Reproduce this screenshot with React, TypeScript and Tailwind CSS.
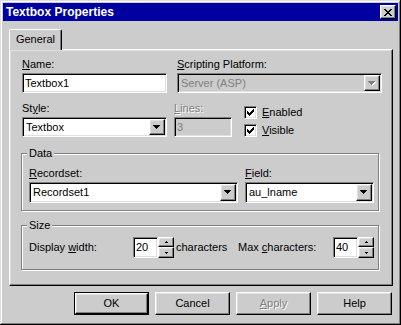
import React from "react";

const face = "bg-[#cccccc]";
const sunken =
  "border border-t-[#808080] border-l-[#808080] border-b-white border-r-white shadow-[inset_1px_1px_0_#000,inset_-1px_-1px_0_#dfdfdf]";
const raised =
  "border border-t-white border-l-white border-b-black border-r-black shadow-[inset_-1px_-1px_0_#808080,inset_1px_1px_0_#dfdfdf]";
const etched = "border border-[#808080] shadow-[inset_1px_1px_0_#fff,1px_1px_0_#fff]";
const grayText = "text-[#808080] [text-shadow:1px_1px_0_#fff]";

const DownArrow = ({ disabled = false }: { disabled?: boolean }) => (
  <svg width="8" height="5" viewBox="0 0 8 5" shapeRendering="crispEdges">
    {disabled && (
      <path d="M1 1H8V2H7V3H6V4H5V5H4V4H3V3H2V2H1Z" fill="#fff" />
    )}
    <path
      d="M0 0H7V1H6V2H5V3H4V4H3V3H2V2H1V1H0Z"
      fill={disabled ? "#808080" : "#000"}
    />
  </svg>
);

const TinyArrow = ({ up }: { up?: boolean }) => (
  <svg width="3" height="2" viewBox="0 0 3 2" shapeRendering="crispEdges">
    <path d={up ? "M1 0H2V1H3V2H0V1H1Z" : "M0 0H3V1H2V2H1V1H0Z"} fill="#000" />
  </svg>
);

const CloseGlyph = () => (
  <svg width="8" height="7" viewBox="0 0 8 7" shapeRendering="crispEdges">
    <path
      d="M0 0H2V1H3V2H5V1H6V0H8V1H7V2H6V3H5V4H6V5H7V6H8V7H6V6H5V5H3V6H2V7H0V6H1V5H2V4H3V3H2V2H1V1H0Z"
      fill="#000"
    />
  </svg>
);

const CheckMark = () => (
  <svg width="7" height="7" viewBox="0 0 7 7" shapeRendering="crispEdges">
    <path
      d="M6 0H7V3H6V4H5V5H4V6H3V7H2V6H1V5H0V2H1V3H2V4H3V3H4V2H5V1H6Z"
      fill="#000"
    />
  </svg>
);

const Combo = ({
  value,
  className,
  disabled = false,
}: {
  value: string;
  className: string;
  disabled?: boolean;
}) => (
  <div
    className={`${sunken} ${className} flex items-center p-px ${
      disabled ? face : "bg-white"
    }`}
  >
    <span className={`flex-1 pl-[2px] ${disabled ? "text-[#808080]" : ""}`}>
      {value}
    </span>
    <div
      className={`${raised} ${face} w-[16px] self-stretch flex items-center justify-center`}
    >
      <DownArrow disabled={disabled} />
    </div>
  </div>
);

const Spin = ({ value }: { value: string }) => (
  <div className="flex h-[21px]">
    <div className={`${sunken} bg-white w-[25px] flex items-center pl-[2px]`}>
      {value}
    </div>
    <div className="flex flex-col w-[16px]">
      <div className={`${raised} ${face} h-[10px] flex items-center justify-center`}>
        <TinyArrow up />
      </div>
      <div className={`${raised} ${face} h-[11px] flex items-center justify-center`}>
        <TinyArrow />
      </div>
    </div>
  </div>
);

const Check = ({ label, u }: { label: string; u: string }) => (
  <div className="flex items-center h-[13px]">
    <div
      className={`${sunken} bg-white w-[13px] h-[13px] flex items-center justify-center`}
    >
      <CheckMark />
    </div>
    <span className="ml-[5px]">
      <u>{u}</u>
      {label}
    </span>
  </div>
);

const Btn = ({
  children,
  def = false,
  disabled = false,
}: {
  children: React.ReactNode;
  def?: boolean;
  disabled?: boolean;
}) =>
  def ? (
    <div className="w-[75px] h-[23px] border border-black">
      <div className={`${raised} w-full h-full flex items-center justify-center`}>
        {children}
      </div>
    </div>
  ) : (
    <div
      className={`${raised} w-[75px] h-[23px] flex items-center justify-center ${
        disabled ? grayText : ""
      }`}
    >
      {children}
    </div>
  );

export default function App() {
  return (
    <div
      className={`w-[401px] h-[325px] ${face} p-[3px] shadow-[inset_-1px_-1px_0_#000,inset_1px_1px_0_#dfdfdf,inset_-2px_-2px_0_#808080,inset_2px_2px_0_#fff] font-['Liberation_Sans',Arial,sans-serif] text-[11px] leading-[13px] text-black`}
    >
      <div className="h-[18px] bg-[#0000a0] flex items-center justify-between pl-[3px] pr-[2px]">
        <span className="text-white font-bold text-[12px]">Textbox Properties</span>
        <div
          className={`${raised} ${face} w-[16px] h-[14px] flex items-center justify-center`}
        >
          <CloseGlyph />
        </div>
      </div>

      <div className="pl-[6px] pr-[5px] pt-[8px]">
        <div className="flex">
          <div
            className={`relative z-10 -mb-px w-[53px] h-[21px] ${face} border-l border-t border-r border-l-white border-t-white border-r-black rounded-t-[2px] shadow-[inset_-1px_0_0_#808080] flex justify-center pt-[3px]`}
          >
            General
          </div>
        </div>

        <div
          className={`${raised} h-[237px] pl-[11px] pt-[8px]`}
        >
          <div className="flex pl-px">
            <div className="w-[145px]">
              <div>
                <u>N</u>ame:
              </div>
              <div
                className={`${sunken} bg-white mt-[2px] h-[20px] flex items-center pl-[2px]`}
              >
                Textbox1
              </div>
            </div>
            <div className="ml-[10px]">
              <div>
                <u>S</u>cripting Platform:
              </div>
              <Combo
                value="Server (ASP)"
                className="mt-[2px] w-[205px] h-[20px]"
                disabled
              />
            </div>
          </div>

          <div className="flex pl-px mt-[9px]">
            <div className="w-[145px]">
              <div>
                St<u>y</u>le:
              </div>
              <Combo value="Textbox" className="mt-[2px] w-[145px] h-[20px]" />
            </div>
            <div className="ml-[7px]">
              <div className={grayText}>
                <u>L</u>ines:
              </div>
              <div
                className={`${sunken} ${face} mt-[2px] w-[58px] h-[20px] flex items-center pl-[2px] text-[#808080]`}
              >
                3
              </div>
            </div>
            <div className="ml-[12px] mt-[4px] flex flex-col gap-[5px]">
              <Check u="E" label="nabled" />
              <Check u="V" label="isible" />
            </div>
          </div>

          <div className={`relative ${etched} mt-[16px] w-[358px] h-[58px] pl-[7px] pt-[13px]`}>
            <span className={`absolute left-[5px] -top-[7px] px-[2px] ${face}`}>Data</span>
            <div className="flex">
              <div className="w-[209px]">
                <div>
                  <u>R</u>ecordset:
                </div>
                <Combo value="Recordset1" className="mt-[2px] w-[209px] h-[21px]" />
              </div>
              <div className="ml-[7px] w-[129px]">
                <div>
                  <u>F</u>ield:
                </div>
                <Combo value="au_lname" className="mt-[2px] w-[129px] h-[21px]" />
              </div>
            </div>
          </div>

          <div className={`relative ${etched} mt-[14px] w-[358px] h-[45px] pl-[7px] pt-[11px]`}>
            <span className={`absolute left-[5px] -top-[7px] px-[2px] ${face}`}>Size</span>
            <div className="flex items-center">
              <span className="w-[104px]">
                Display <u>w</u>idth:
              </span>
              <Spin value="20" />
              <span className="ml-[2px] w-[62px]">characters</span>
              <span className="w-[95px]">
                Max <u>c</u>haracters:
              </span>
              <Spin value="40" />
            </div>
          </div>
        </div>

        <div className="flex justify-end gap-[6px] mt-[6px] pr-px">
          <Btn def>OK</Btn>
          <Btn>Cancel</Btn>
          <Btn disabled>
            <span>
              <u>A</u>pply
            </span>
          </Btn>
          <Btn>Help</Btn>
        </div>
      </div>
    </div>
  );
}
